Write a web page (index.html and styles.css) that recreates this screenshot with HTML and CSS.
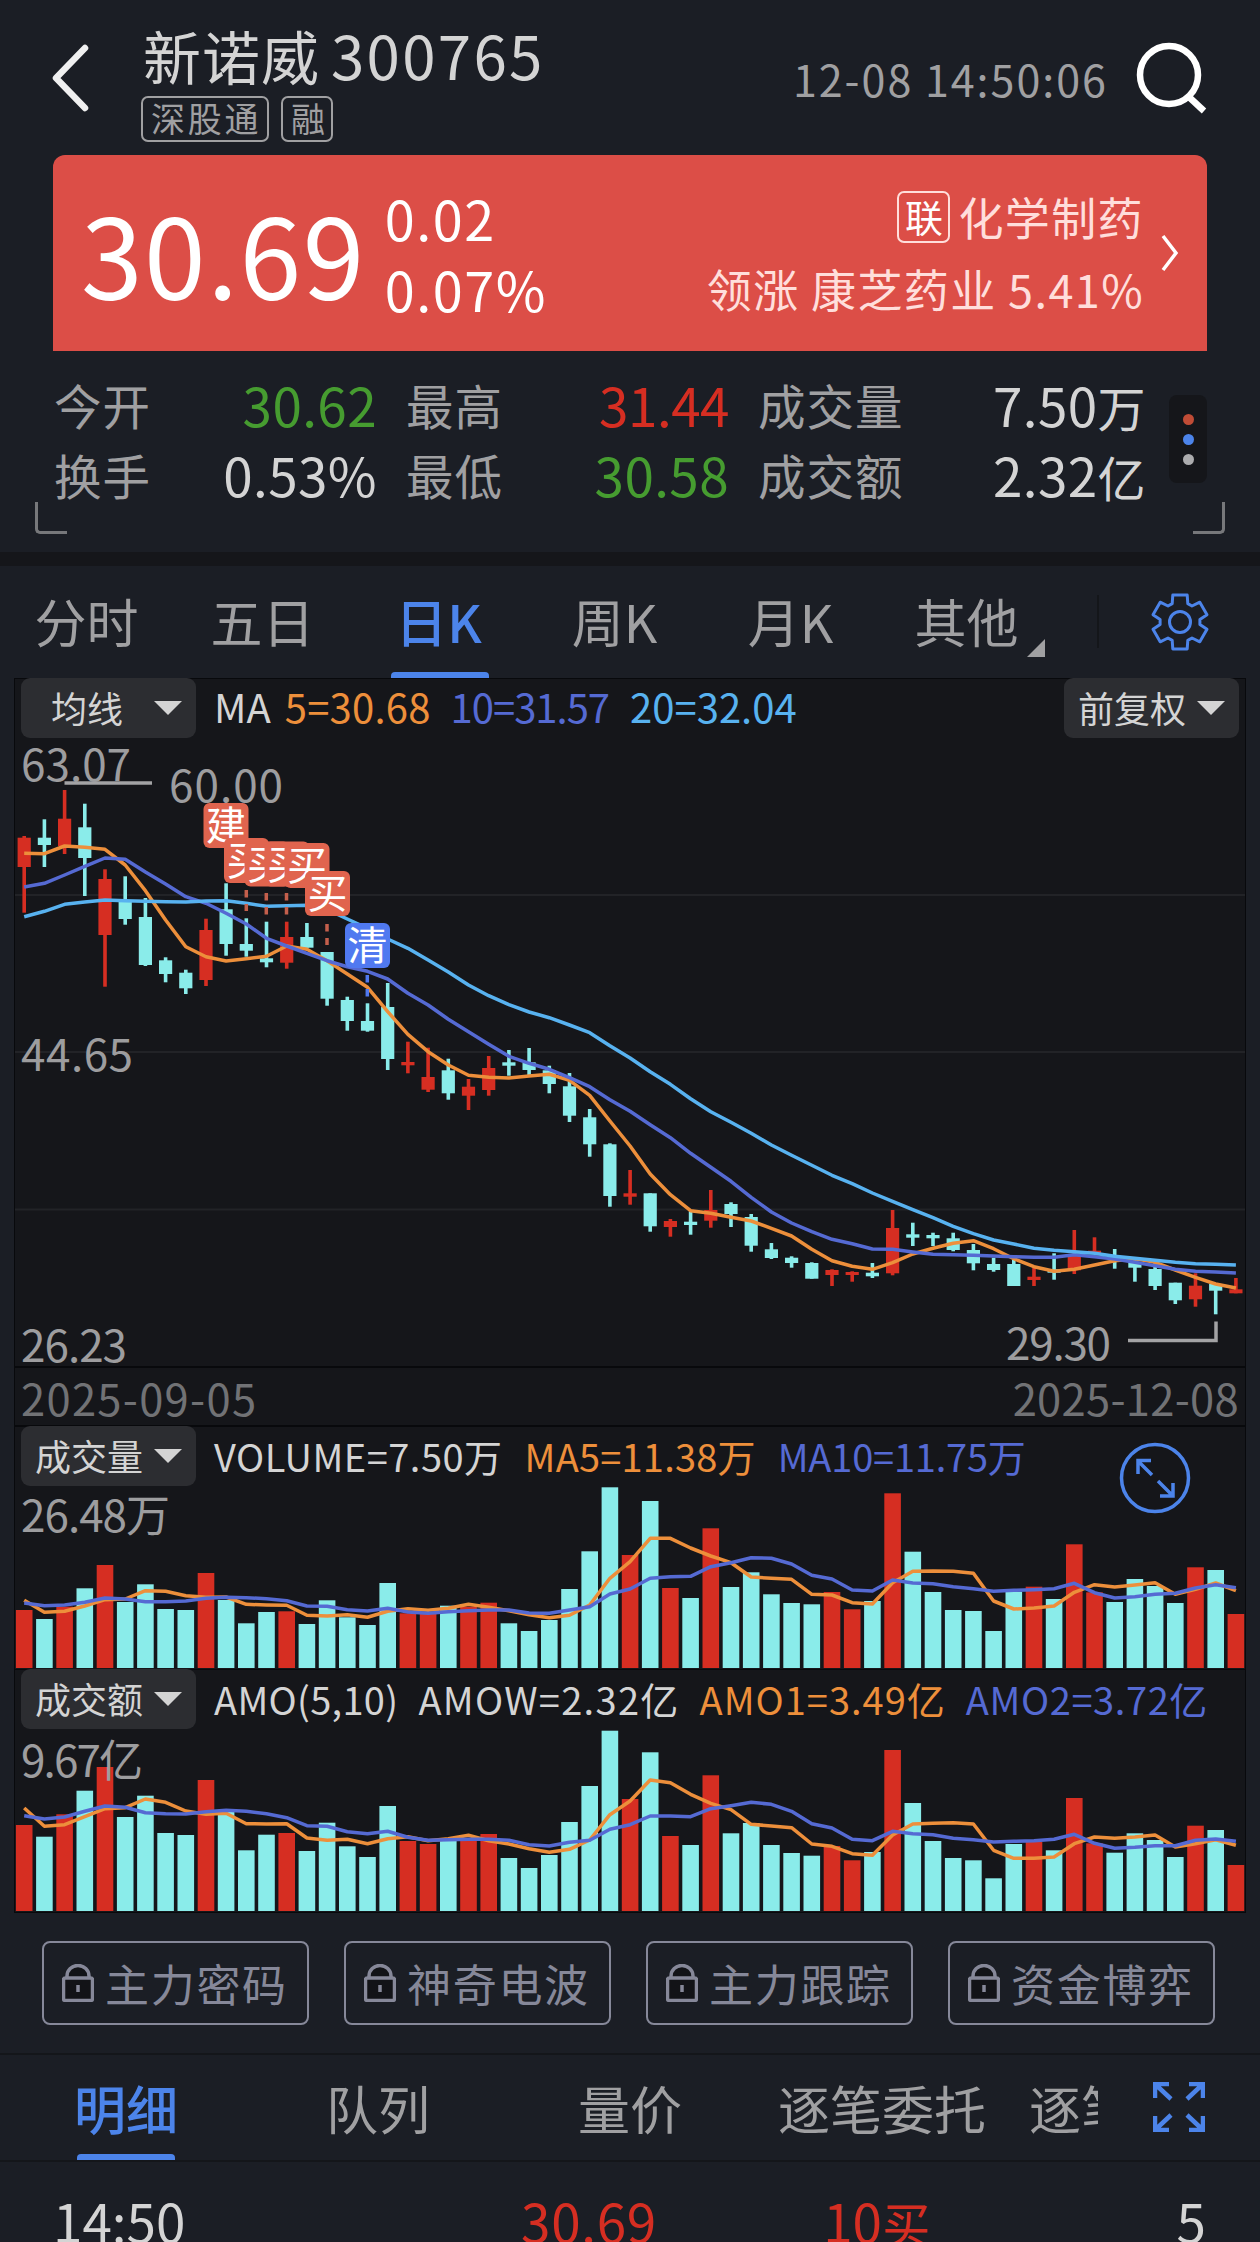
FILE: index.html
```
<!DOCTYPE html>
<html lang="zh-CN">
<head>
  <meta charset="UTF-8" />
  <meta name="viewport" content="width=device-width, initial-scale=1" />
  <title>新诺威 300765</title>
  <link rel="stylesheet" href="styles.css">
</head>
<body>
  <header class="header">
    <svg class="back" viewBox="0 0 40 70"><path d="M35 5 L6 35 L35 65" /></svg>
    <div class="stock">
      <h1>新诺威<span class="code">300765</span></h1>
      <div class="tags"><span class="tag">深股通</span><span class="tag">融</span></div>
    </div>
    <div class="time">12-08 14:50:06</div>
    <svg class="search" viewBox="0 0 76 76"><circle cx="35" cy="35" r="29" /><path d="M55 57 L70 71" /></svg>
  </header>

  <section class="card">
    <div class="price">30.69</div>
    <div class="change"><div>0.02</div><div>0.07%</div></div>
    <div class="industry">
      <div class="industry-name"><span class="lian">联</span>化学制药</div>
      <div>领涨 康芝药业 5.41%</div>
    </div>
    <svg class="arrow" viewBox="0 0 20 40"><path d="M3 3 L16 20 L3 37" /></svg>
  </section>

  <section class="quote">
    <div class="quote-grid">
      <span class="label">今开</span><b class="down">30.62</b>
      <span class="label">最高</span><b class="up high">31.44</b>
      <span class="label">成交量</span><b>7.50<i>万</i></b>
      <span class="label">换手</span><b>0.53%</b>
      <span class="label">最低</span><b class="down">30.58</b>
      <span class="label">成交额</span><b>2.32<i>亿</i></b>
    </div>
    <div class="more"><span class="dot red"></span><span class="dot blue"></span><span class="dot gray"></span></div>
    <div class="corner left"></div>
    <div class="corner right"></div>
  </section>

  <nav class="period">
    <a>分时</a>
    <a>五日</a>
    <a class="active">日K</a>
    <a>周K</a>
    <a>月K</a>
    <a class="other">其他</a>
    <div class="settings">
      <svg viewBox="-32 -32 64 64"><path id="gear" /><circle r="10.5" /></svg>
    </div>
  </nav>

  <main class="charts">
    <div class="panel">
      <div class="legend">
        <button class="select narrow">均线</button>
        <div class="values ma"><span>MA</span><span class="orange">5=30.68</span><span class="purple">10=31.57</span><span class="sky">20=32.04</span></div>
        <button class="select">前复权</button>
      </div>
      <svg class="kline" viewBox="15 740 1230 626">
        <g class="grid"><path d="M15 895 H1245 M15 1052 H1245 M15 1209.5 H1245" /></g>
        <g id="candles"></g>
        <g id="kma"></g>
        <g class="hint"><path d="M64.5 783 H152" /><path d="M1128 1340.5 H1216 V1321.5" /></g>
        <g class="axis">
          <text x="21" y="781" textLength="110">63.07</text>
          <text x="21" y="1071" textLength="112">44.65</text>
          <text x="21" y="1362" textLength="106">26.23</text>
          <text x="169" y="802" textLength="114">60.00</text>
          <text x="1006" y="1360" textLength="105">29.30</text>
        </g>
        <g id="trades"></g>
      </svg>
    </div>

    <div class="dates"><span class="from">2025-09-05</span><span>2025-12-08</span></div>

    <div class="panel bars">
      <div class="legend">
        <button class="select">成交量</button>
        <div class="values vol"><span>VOLUME=7.50万</span><span class="orange">MA5=11.38万</span><span class="purple">MA10=11.75万</span></div>
      </div>
      <svg class="hist" viewBox="15 0 1230 182">
        <g id="volume"></g>
        <g class="axis"><text x="21" y="45" textLength="149">26.48万</text></g>
      </svg>
      <svg class="zoom" viewBox="-36 -36 72 72">
        <circle r="33.5" />
        <path d="M-3 -3 L-17 -17 M-17 -4 V-17.500 H-4 M3 3 L18 18 M18 5 V18 H5" />
      </svg>
    </div>

    <div class="panel bars">
      <div class="legend">
        <button class="select">成交额</button>
        <div class="values amo"><span>AMO(5,10)</span><span class="amow">AMOW=2.32亿</span><span class="orange">AMO1=3.49亿</span><span class="purple">AMO2=3.72亿</span></div>
      </div>
      <svg class="hist" viewBox="15 0 1230 182">
        <g id="amount"></g>
        <g class="axis"><text x="21" y="47" textLength="122">9.67亿</text></g>
      </svg>
    </div>
  </main>

  <section class="locked">
    <button><svg viewBox="0 0 32 38"><path class="shackle" d="M5 14 V12 A11 10.500 0 0 1 27 12 V14" /><rect x="1.500" y="14" width="29" height="22.500" rx="2" /><path d="M16 21 V28" /></svg>主力密码</button>
    <button><svg viewBox="0 0 32 38"><path class="shackle" d="M5 14 V12 A11 10.500 0 0 1 27 12 V14" /><rect x="1.500" y="14" width="29" height="22.500" rx="2" /><path d="M16 21 V28" /></svg>神奇电波</button>
    <button><svg viewBox="0 0 32 38"><path class="shackle" d="M5 14 V12 A11 10.500 0 0 1 27 12 V14" /><rect x="1.500" y="14" width="29" height="22.500" rx="2" /><path d="M16 21 V28" /></svg>主力跟踪</button>
    <button><svg viewBox="0 0 32 38"><path class="shackle" d="M5 14 V12 A11 10.500 0 0 1 27 12 V14" /><rect x="1.500" y="14" width="29" height="22.500" rx="2" /><path d="M16 21 V28" /></svg>资金博弈</button>
  </section>

  <nav class="detail">
    <div class="detail-tabs">
      <a class="active">明细</a>
      <a>队列</a>
      <a>量价</a>
      <a>逐笔委托</a>
      <a class="cut">逐笔</a>
    </div>
    <svg class="expand" viewBox="0 0 52 50">
      <path d="M2 16 V2 H16 M2 2 L18 17 M36 2 H50 V16 M50 2 L34 17 M2 34 V48 H16 M2 48 L18 33 M36 48 H50 V34 M50 48 L34 33" />
    </svg>
  </nav>

  <div class="tick">
    <span>14:50</span>
    <span class="up">30.69</span>
    <span class="up">10<i>买</i></span>
    <span>5</span>
  </div>

  <script src="chart.js"></script>
</body>
</html>
```

FILE: styles.css
```
:root {
  --bg: #1b1e25;
  --panel: #15161a;
  --line: #08090c;
  --fg: #d4d4d4;
  --muted: #a0a0a2;
  --red: #d62e22;
  --green: #469c30;
  --cyan: #8aecea;
  --orange: #ed8f3b;
  --purple: #556ad3;
  --sky: #58b2f0;
  --blue: #4c84ea;
}

* {
  box-sizing: border-box;
}

body {
  margin: 0;
  width: 1260px;
  height: 2242px;
  overflow: hidden;
  background: var(--bg);
  color: var(--fg);
  font-family: "Noto Sans CJK SC", sans-serif;
}

svg {
  display: block;
  fill: none;
  flex: none;
}

button {
  font: inherit;
  color: inherit;
  border: none;
  padding: 0;
}

i {
  font-style: normal;
}

.up { color: var(--red); }
.down { color: var(--green); }
.orange { color: var(--orange); }
.purple { color: var(--purple); }
.sky { color: var(--sky); }

/* header */
.header {
  display: flex;
  align-items: flex-start;
  height: 155px;
  padding: 0 50px 0 50px;
}

.back {
  width: 40px;
  height: 70px;
  margin-top: 43px;
  stroke: #f0f0f0;
  stroke-width: 6.500;
  stroke-linejoin: round;
  stroke-linecap: round;
}

.stock {
  margin-left: 53px;
  padding-top: 19px;
}

h1 {
  margin: 0;
  font-size: 58px;
  font-weight: 400;
  line-height: 70px;
  letter-spacing: 1px;
}

.code {
  font-size: 60px;
  letter-spacing: 2.300px;
  margin-left: 11px;
}

.tags {
  display: flex;
  gap: 12px;
  margin: 6px 0 0 -2px;
}

.tag {
  height: 46px;
  padding: 0 6px 0 8px;
  border: 2px solid var(--muted);
  border-radius: 7px;
  color: var(--muted);
  font-size: 34px;
  line-height: 40px;
  letter-spacing: 2.700px;
}

.tag + .tag {
  padding: 0 6px 0 8px;
  letter-spacing: 0;
}

.time {
  margin: 50px 26px 0 auto;
  color: var(--muted);
  font-size: 43px;
  line-height: 56px;
  letter-spacing: 2px;
}

.search {
  width: 76px;
  height: 76px;
  margin-top: 40px;
  stroke: #fff;
  stroke-width: 6.500;
}

/* price card */
.card {
  display: flex;
  align-items: center;
  height: 196px;
  margin: 0 53px;
  padding-left: 28px;
  border-radius: 12px 12px 0 0;
  background: #dc4e47;
  color: #fff;
}

.price {
  font-size: 111px;
  line-height: 120px;
  margin-top: -2px;
  letter-spacing: 1.500px;
}

.change {
  margin-left: 19px;
  font-size: 54px;
  line-height: 71px;
  letter-spacing: 1.500px;
}

.industry {
  margin-left: auto;
  color: #ffdedb;
  font-size: 45px;
  line-height: 72px;
  letter-spacing: 1.400px;
  text-align: right;
}

.industry-name {
  display: flex;
  justify-content: flex-end;
  align-items: center;
}

.lian {
  width: 53px;
  height: 52px;
  margin-right: 8px;
  border: 2px solid #ffdedb;
  border-radius: 7px;
  color: #fff;
  font-size: 38px;
  line-height: 45px;
  letter-spacing: 0;
  text-align: center;
}

.arrow {
  width: 20px;
  height: 40px;
  margin: 0 27px 0 16px;
  stroke: #fff;
  stroke-width: 3.500;
}

/* quote */
.quote {
  position: relative;
  display: flex;
  height: 201px;
  padding: 18px 53px 0 54px;
}

.quote-grid {
  display: grid;
  grid-template-columns: 99px 224px 29px 99px 224px 29px 150px 238px;
  grid-auto-rows: 70px;
  line-height: 70px;
}

.quote-grid > :nth-child(6n + 3) { grid-column: 4; }
.quote-grid > :nth-child(6n + 5) { grid-column: 7; }

.label {
  padding-top: 1px;
  color: var(--muted);
  font-size: 47.500px;
  letter-spacing: 1px;
}

.quote-grid b {
  font-size: 53px;
  font-weight: 400;
  text-align: right;
  letter-spacing: 0.400px;
}

.quote-grid .high {
  letter-spacing: -0.500px;
}

.quote-grid i {
  font-size: 48px;
}

.more {
  display: flex;
  flex-direction: column;
  align-items: center;
  justify-content: center;
  gap: 9px;
  width: 38px;
  height: 88px;
  margin: 26px 0 0 auto;
  border-radius: 8px;
  background: var(--panel);
}

.dot {
  width: 11px;
  height: 11px;
  border-radius: 50%;
}

.dot.red { background: #c04c36; }
.dot.blue { background: var(--blue); }
.dot.gray { background: #acacae; }

.corner {
  position: absolute;
  top: 151px;
  width: 32px;
  height: 32px;
  border-bottom: 3px solid #77787b;
}

.corner.left {
  left: 35px;
  border-left: 3px solid #77787b;
  border-bottom-left-radius: 5px;
}

.corner.right {
  right: 35px;
  border-right: 3px solid #77787b;
  border-bottom-right-radius: 5px;
}

/* period tabs */
.period {
  display: flex;
  height: 126px;
  border-top: 14px solid var(--panel);
}

.period a {
  position: relative;
  width: 176px;
  padding-right: 3px;
  color: var(--muted);
  font-size: 52px;
  line-height: 110px;
  text-align: center;
}

.period a.active,
.detail a.active {
  color: var(--blue);
  font-weight: 500;
}

.active::after {
  content: "";
  position: absolute;
  left: 50%;
  bottom: 0;
  width: 98px;
  height: 6px;
  margin-left: -49px;
  border-radius: 4px 4px 0 0;
  background: var(--blue);
}

.other::after {
  content: "";
  position: absolute;
  right: 11px;
  bottom: 21px;
  border-left: 18px solid transparent;
  border-bottom: 18px solid var(--muted);
}

.settings {
  flex: 1;
  height: 53px;
  margin: 29px 0 0 41px;
  border-left: 2px solid #14161a;
}

.settings svg {
  width: 64px;
  height: 64px;
  margin: -5px 0 0 49px;
  stroke: var(--blue);
  stroke-width: 3;
  stroke-linejoin: round;
}

/* charts */
.charts {
  margin: 0 14px;
  height: 1235px;
  border: 1px solid var(--line);
  background: var(--panel);
}

.legend {
  display: flex;
  height: 60px;
  padding: 0 6px;
}

.select {
  display: flex;
  align-items: center;
  justify-content: space-between;
  width: 175px;
  height: 60px;
  margin-top: -1px;
  padding: 0 14px 3px;
  border-radius: 9px;
  background: #2c2d31;
  font-size: 36px;
}

.select::after {
  content: "";
  margin-top: 3px;
  border: 14px solid transparent;
  border-top-color: var(--fg);
  border-bottom: 0;
}

.select.narrow {
  padding-left: 30px;
}

.values {
  display: flex;
  flex: 1;
  margin-left: 18px;
  font-size: 40px;
  line-height: 55px;
  white-space: nowrap;
}

.ma { gap: 14px; }
.ma .orange { margin-right: 6px; letter-spacing: 0.200px; }
.ma .purple { margin-right: 7px; letter-spacing: -1px; }

.vol { gap: 22px; font-size: 38px; line-height: 57px; letter-spacing: 0.500px; }
.vol .orange { letter-spacing: 0.200px; }
.vol .purple { letter-spacing: -0.200px; }

.amo { gap: 20px; font-size: 38px; line-height: 58px; letter-spacing: 0.300px; }
.amo .amow { letter-spacing: 1.300px; }
.amo .orange { letter-spacing: 1px; }
.amo .purple { letter-spacing: 0.600px; }

.kline {
  width: 1230px;
  height: 626px;
  margin-top: 1px;
}

.grid path {
  stroke: #222327;
  stroke-width: 2;
}

.hint path {
  stroke: #a3a3a5;
  stroke-width: 3.500;
}

.axis text {
  fill: #9d9d9f;
  font-size: 44px;
}

.dates {
  display: flex;
  justify-content: space-between;
  height: 61px;
  padding: 0 6px;
  border-top: 2px solid var(--line);
  border-bottom: 2px solid var(--line);
  color: #717275;
  font-size: 43.500px;
  line-height: 59px;
  letter-spacing: 0.300px;
}

.dates .from {
  letter-spacing: 1.300px;
}

.bars {
  position: relative;
  height: 243px;
  border-bottom: 1px solid var(--line);
}

.hist {
  width: 1230px;
  height: 182px;
}

.zoom {
  position: absolute;
  top: 15px;
  left: 1104px;
  width: 72px;
  height: 72px;
  stroke: var(--blue);
  stroke-width: 3.500;
}

.rise { fill: var(--red); }
.fall { fill: var(--cyan); }

.ma5, .ma10, .ma20 {
  stroke-width: 3.500;
  stroke-linejoin: round;
}

.ma5 { stroke: var(--orange); }
.ma10 { stroke: var(--purple); }
.ma20 { stroke: var(--sky); }

.buy { fill: #e0644e; }
.clear { fill: #5079f0; }

.mark {
  fill: #fff;
  font-size: 40px;
  text-anchor: middle;
}

.stem {
  stroke-width: 3.500;
  stroke-dasharray: 7.500 6.500;
}

.stem.buy { stroke: #c45f4c; }
.stem.clear { stroke: #5079f0; }

/* locked indicators */
.locked {
  display: flex;
  gap: 35px;
  height: 142px;
  padding: 28px 42px 0;
  border-bottom: 2px solid #14161a;
}

.locked button {
  display: flex;
  align-items: center;
  gap: 11px;
  width: 267px;
  height: 84px;
  padding: 0 0 0 18px;
  border: 2px solid #868899;
  border-radius: 8px;
  background: none;
  color: #868899;
  font-size: 44px;
  letter-spacing: 1.700px;
  white-space: nowrap;
}

.locked svg {
  width: 32px;
  height: 38px;
  stroke: #868899;
  stroke-width: 3.500;
}

.locked rect,
.locked .shackle {
  fill: #121317;
}

/* detail */
.detail {
  display: flex;
  height: 107px;
  border-bottom: 2px solid #14161a;
}

.detail-tabs {
  display: flex;
  width: 1098px;
  height: 105px;
  overflow: hidden;
}

.detail a {
  position: relative;
  flex: 0 0 252px;
  color: var(--muted);
  font-size: 52px;
  line-height: 105px;
  text-align: center;
}

.detail .cut {
  padding-left: 21px;
  text-align: left;
}

.expand {
  width: 52px;
  height: 50px;
  margin: 27px 0 0 55px;
  stroke: var(--blue);
  stroke-width: 4.500;
}

.tick {
  display: grid;
  grid-template-columns: 455px 201px 273px 1fr;
  padding: 22px 54px 0 53px;
  font-size: 53px;
  line-height: 73px;
}

.tick span:nth-child(n + 2) {
  text-align: right;
}

.tick span:nth-child(2) {
  margin-right: 52px;
  letter-spacing: 0.700px;
}

.tick span:nth-child(3) {
  margin-right: 52px;
}

.tick i {
  font-size: 48px;
}
```

FILE: chart.js
```
const STEP = 20.195;
const FIRST = 24.2;
const COUNT = 61;

// R = close above open, C = close below open
const kinds = "RCRCRCCCCRCCCRCCCCCRRCRRCCCCCCRCRCRCCCCCRRCRCCCCCCRCRRCCCCRCR";

// high, body top, body bottom, low
const candles = [
  [836, 837.7, 867, 912.7], [819.3, 837.7, 845, 867], [790, 818.7, 846, 854], [803.7, 827.3, 858, 896],
  [869.3, 879, 935, 986.7], [876.3, 901.3, 919, 924.7], [898, 917, 965, 966], [957.3, 960.3, 974, 982.3],
  [969.7, 972.7, 988.3, 994], [918.7, 930, 980, 986], [883.3, 909.3, 944, 955.7], [918.3, 944, 950.7, 956.7],
  [921.7, 958.3, 962.3, 967.3], [921.7, 937, 962.7, 968.7], [923, 937, 947.7, 947.7], [952, 952, 998.7, 1005.7],
  [996.7, 1000, 1021, 1030.7], [1003.3, 1021, 1030.7, 1031.7], [983, 1007, 1059, 1070], [1041.7, 1062, 1065.3, 1073.3],
  [1047.7, 1077, 1089.7, 1092], [1058.7, 1070.3, 1093.3, 1099.7], [1079, 1086.7, 1095.7, 1110], [1056, 1068, 1090, 1095.7],
  [1050, 1062.3, 1065.7, 1075.7], [1048, 1062.3, 1070, 1075], [1065.7, 1070.3, 1084, 1093.3], [1073, 1086.3, 1115.7, 1122],
  [1109, 1117.3, 1144.3, 1156.7], [1143.3, 1144.3, 1196, 1206.7], [1170, 1193.3, 1196.7, 1204.7], [1193.3, 1193.3, 1226.3, 1231.7],
  [1219, 1221, 1227, 1236.7], [1211.3, 1221.7, 1225, 1234.7], [1190, 1210, 1220.7, 1227.7], [1202.3, 1204, 1214, 1227],
  [1214, 1217, 1245.7, 1251.7], [1243, 1249.3, 1258, 1259], [1256.3, 1257.7, 1263, 1267.7], [1262.3, 1263, 1278.7, 1278.7],
  [1269.3, 1270, 1275, 1286], [1271.3, 1272, 1275, 1281.7], [1263, 1272.7, 1276.3, 1278], [1210, 1228, 1273.3, 1275.3],
  [1222.7, 1234.3, 1237.7, 1246], [1232.7, 1235, 1238.3, 1246], [1232.7, 1238.3, 1250, 1251.3], [1244, 1250, 1263.3, 1270.3],
  [1257.7, 1264, 1270, 1271.7], [1260, 1264, 1286, 1286], [1267.3, 1276.7, 1280, 1286], [1253.3, 1269.3, 1272.7, 1279.7],
  [1230, 1255.7, 1270.3, 1274], [1237.3, 1250.7, 1254, 1254], [1249, 1256, 1259, 1268.7], [1260, 1263, 1267.7, 1281.7],
  [1263, 1269, 1286, 1290], [1282.7, 1282.7, 1300.3, 1304], [1273.3, 1285.7, 1299.3, 1306.7], [1284, 1284, 1290.7, 1314.3],
  [1278, 1289.3, 1293.3, 1293.3]
];

const ma5 = [
  853.3, 853.7, 846, 847.3, 849.3, 865, 890.7, 920, 946.7, 956.7,
  961, 958.7, 956.3, 946, 949.3, 960.7, 974, 987.3, 1011.7, 1034.3,
  1051.7, 1065, 1075.3, 1077.3, 1078, 1076, 1074.3, 1080.3, 1095.3, 1121,
  1146, 1174, 1194.7, 1210.7, 1213.3, 1217.3, 1221, 1228.3, 1236, 1249.3,
  1260.7, 1266.3, 1269.3, 1262.7, 1254, 1248.3, 1243.3, 1240.7, 1248.7, 1258.7,
  1266.7, 1271.3, 1269.3, 1265, 1260.7, 1258.7, 1262.3, 1270, 1277.3, 1284, 1288
];
const ma10 = [
  887, 883.3, 875, 866.3, 858, 859.3, 872, 884, 896.7, 903.3,
  913.3, 924, 938.3, 946, 953.3, 960.7, 966.7, 971.3, 979, 993.3,
  1005, 1019.3, 1031.7, 1044.3, 1056.3, 1063.3, 1069.3, 1077.7, 1086.7, 1099.7,
  1111.3, 1124.7, 1137.7, 1153.3, 1167.3, 1181.3, 1197.3, 1212, 1223, 1231.7,
  1239.3, 1243.7, 1249, 1249.3, 1252, 1254.3, 1254.7, 1255.3, 1256, 1256.7,
  1257.3, 1257.3, 1254.7, 1256.7, 1259, 1262.3, 1265.7, 1269.3, 1271.3, 1272, 1273
];
const ma20 = [
  916.7, 911.3, 904.3, 902, 900, 900.7, 901.3, 901.7, 902, 901,
  900.7, 903.3, 906.3, 905.7, 905.3, 909.3, 919, 928.3, 939, 948.3,
  960, 972, 985, 995.7, 1004.7, 1012, 1017.7, 1025, 1032.7, 1045.7,
  1058, 1071.7, 1084.3, 1098.7, 1111.7, 1122.3, 1133.3, 1145, 1155.3, 1165.3,
  1175.3, 1183.7, 1193, 1201.3, 1209.7, 1217.7, 1226.3, 1233.7, 1240, 1244,
  1248.3, 1250.3, 1251.7, 1253.3, 1256.3, 1258.3, 1260.3, 1262.3, 1263.7, 1264.3, 1265
];

// histograms: tops and averages, three units to a pixel, base is the zero line
const volume = {
  base: 744,
  bars: [
    570, 597, 560, 505, 435, 546, 493, 567, 570, 459, 540, 610, 576, 574, 612, 541, 592, 615, 489, 580,
    582, 557, 560, 548, 610, 633, 600, 507, 394, 202, 405, 243, 504, 534, 325, 501, 457, 523, 549, 553,
    516, 568, 543, 220, 395, 516, 570, 573, 633, 515, 500, 537, 373, 517, 546, 477, 498, 549, 442, 450, 582
  ],
  ma5: [
    541, 577, 574, 558, 539, 537, 512, 514, 527, 532, 531, 553, 555, 556, 586, 588, 584, 592, 574, 566,
    571, 565, 553, 562, 572, 584, 593, 586, 555, 475, 425, 355, 355, 384, 408, 428, 471, 475, 478, 523,
    525, 548, 552, 488, 454, 453, 454, 460, 543, 567, 564, 558, 517, 494, 501, 495, 488, 523, 508, 489, 512
  ],
  ma10: [
    549, 557, 555, 547, 534, 537, 545, 545, 543, 535, 532, 533, 536, 542, 558, 559, 569, 573, 565, 576,
    580, 575, 572, 570, 570, 579, 580, 570, 560, 522, 507, 475, 470, 469, 440, 428, 413, 415, 432, 466,
    477, 510, 513, 480, 489, 491, 500, 506, 514, 511, 509, 506, 490, 518, 534, 530, 523, 520, 504, 494, 503
  ]
};
const amount = {
  base: 723,
  bars: [
    465, 500, 433, 362, 291, 441, 377, 489, 495, 330, 425, 541, 494, 489, 543, 458, 529, 561, 408, 513,
    522, 512, 512, 492, 564, 594, 555, 456, 348, 182, 387, 247, 498, 525, 316, 490, 459, 525, 549, 557,
    528, 571, 546, 240, 399, 513, 564, 571, 625, 522, 516, 541, 384, 520, 548, 490, 510, 561, 467, 480, 585
  ],
  ma5: [
    414, 469, 464, 440, 416, 413, 387, 397, 423, 433, 430, 461, 462, 461, 504, 511, 508, 521, 506, 500,
    512, 506, 496, 512, 522, 536, 547, 538, 510, 434, 393, 330, 338, 373, 400, 419, 463, 468, 473, 522,
    529, 551, 556, 495, 462, 460, 458, 462, 541, 565, 565, 561, 521, 501, 505, 501, 495, 531, 521, 509, 526
  ],
  ma10: [
    437, 447, 441, 424, 408, 412, 428, 431, 432, 425, 421, 424, 431, 443, 467, 469, 485, 491, 484, 502,
    511, 509, 508, 508, 511, 524, 528, 517, 511, 478, 464, 438, 438, 440, 416, 407, 397, 403, 424, 461,
    474, 508, 512, 484, 491, 494, 505, 509, 516, 514, 512, 508, 493, 520, 535, 532, 527, 527, 511, 507, 514
  ]
};

// left, top, text, stem x, stem top, stem bottom
const trades = [
  [203.5, 803, "建"],
  [224, 838, "买", 246.3, 890, 911],
  [244.5, 841.5, "买", 266.3, 893, 915],
  [264.5, 841.5, "买", 286.5, 893, 915],
  [284.5, 843, "买"],
  [305, 871, "买", 327, 924, 945],
  [345, 923, "清", 367.3, 975, 997]
];

const x = i => FIRST + STEP * i;
const cls = i => (kinds[i] === "R" ? "rise" : "fall");

function rect(left, top, width, height, name) {
  return `<rect class="${name}" x="${left.toFixed(1)}" y="${top.toFixed(1)}" width="${width}" height="${height.toFixed(1)}" />`;
}

function line(values, name) {
  const points = values.map((v, i) => `${x(i).toFixed(1)},${v.toFixed(1)}`).join(" ");
  return `<polyline class="${name}" points="${points}" />`;
}

function drawCandles() {
  let out = "";
  candles.forEach(([high, top, bottom, low], i) => {
    out += rect(x(i) - 1.8, high, 3.6, low - high, cls(i));
    out += rect(x(i) - 6.6, top, 13.2, bottom - top, cls(i));
  });
  document.getElementById("candles").innerHTML = out;
  document.getElementById("kma").innerHTML = line(ma5, "ma5") + line(ma10, "ma10") + line(ma20, "ma20");
}

function drawHistogram(id, data) {
  const y = v => 181 - (data.base - v) / 3;
  let out = "";
  for (let i = 0; i < COUNT; i++) {
    const top = y(data.bars[i]);
    out += rect(x(i) - 8.3, top, 16.6, 181 - top, cls(i));
  }
  out += line(data.ma5.map(y), "ma5") + line(data.ma10.map(y), "ma10");
  document.getElementById(id).innerHTML = out;
}

function drawTrades() {
  document.getElementById("trades").innerHTML = trades.map(([left, top, text, sx, s1, s2]) => {
    const name = text === "清" ? "clear" : "buy";
    const stem = sx ? `<path class="stem ${name}" d="M${sx} ${s1} V${s2}" />` : "";
    return `${stem}<rect class="${name}" x="${left}" y="${top}" width="45" height="45" rx="6" />
      <text class="mark" x="${left + 22.5}" y="${top + 37}">${text}</text>`;
  }).join("");
}

function drawGear() {
  const points = [];
  for (let i = 0; i < 6; i++) {
    [[-15, 28], [15, 28], [23, 20], [37, 20]].forEach(([offset, r]) => {
      const a = (i * 60 + offset - 90) * Math.PI / 180;
      points.push(`${(r * Math.cos(a)).toFixed(1)} ${(r * Math.sin(a)).toFixed(1)}`);
    });
  }
  document.getElementById("gear").setAttribute("d", "M" + points.join(" L") + " Z");
}

drawCandles();
drawHistogram("volume", volume);
drawHistogram("amount", amount);
drawTrades();
drawGear();
```
